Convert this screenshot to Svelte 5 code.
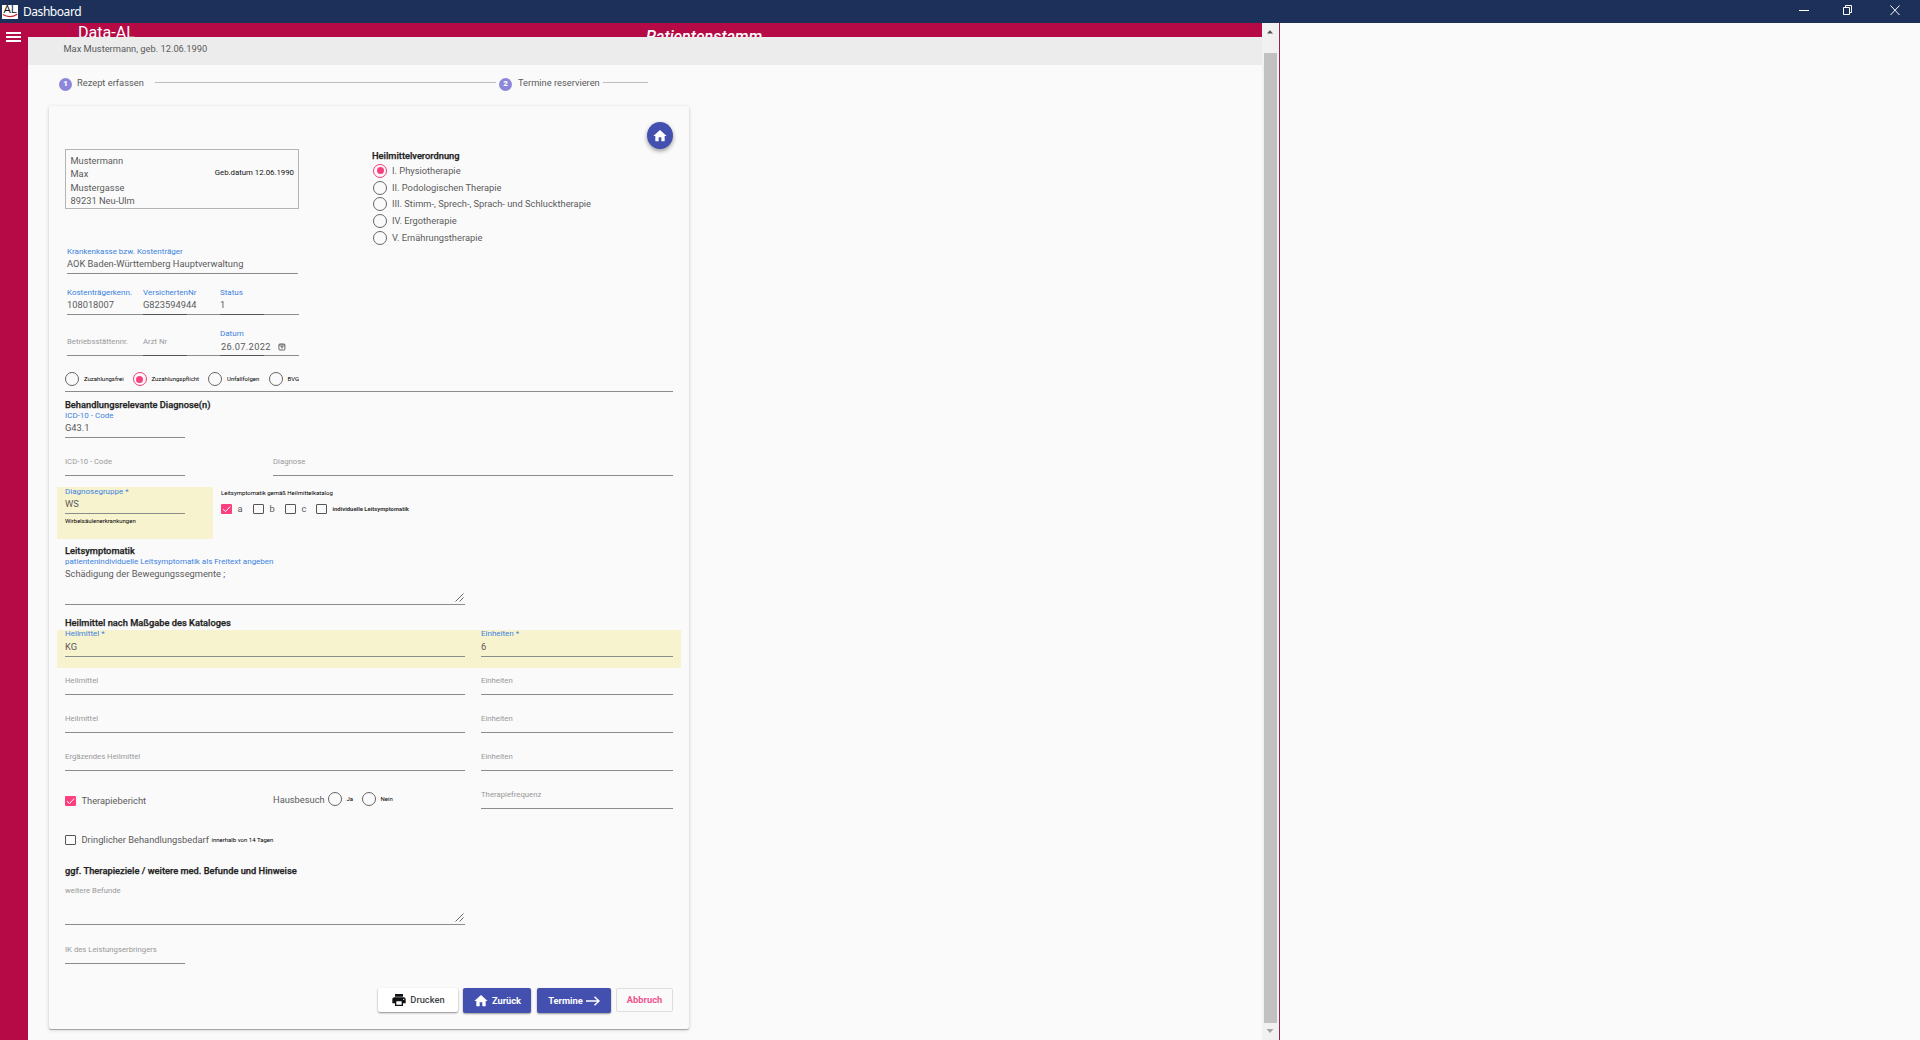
<script>
  const address = ['Mustermann', 'Max', 'Mustergasse', '89231 Neu-Ulm'];
  const therapies = [
    'I. Physiotherapie',
    'II. Podologischen Therapie',
    'III. Stimm-, Sprech-, Sprach- und Schlucktherapie',
    'IV. Ergotherapie',
    'V. Ernährungstherapie'
  ];
  const remedies = ['Heilmittel', 'Heilmittel', 'Ergäzendes Heilmittel'];
</script>

{#snippet field(label, value = '', cls = '')}
  <div class="field {cls}" class:filled={value}>
    <span class="label">{label}</span>
    {#if value}<span class="value">{value}</span>{/if}
  </div>
{/snippet}

{#snippet radio(on = false)}
  <span class="radio" class:on></span>
{/snippet}

{#snippet check(on = false)}
  <span class="check" class:on>
    {#if on}<svg viewBox="0 0 11 10"><path d="M2 5.2 4.5 7.5 9.2 2.6" /></svg>{/if}
  </span>
{/snippet}

{#snippet grip()}
  <svg class="grip" viewBox="0 0 9 9"><path d="M.5 8.5l8-8M4.5 8.5l4-4" /></svg>
{/snippet}

{#snippet home()}
  <svg class="icon" viewBox="0 0 24 24"><path d="M10 20v-6h4v6h5v-8h3L12 3 2 12h3v8z" /></svg>
{/snippet}

<div class="window">
  <header class="titlebar">
    <svg class="logo" viewBox="0 0 16 14">
      <rect width="16" height="14" fill="#fff" />
      <text x="1.4" y="8.4" textLength="13.5" lengthAdjust="spacingAndGlyphs">AL</text>
      <path d="M.8 9.6Q8 13.8 15.2 9.2" fill="none" stroke="#c02030" stroke-width="1.2" />
    </svg>
    <span class="wtitle">Dashboard</span>
    <svg class="wbtns" viewBox="0 0 120 23">
      <path d="M6 10.5h10M50.5 7.5h6v7h-6zM52.5 7V5.500h6v7H57M97.500 5.500l9 9.500M106.500 5.500l-9 9.500" />
    </svg>
  </header>

  <div class="shell">
    <nav class="rail"><i></i><i></i><i></i></nav>
    <main class="main">
      <div class="appbar">
        <span class="brand">Data-AL</span>
        <span class="page">Patientenstamm</span>
      </div>
      <div class="patient">Max Mustermann, geb. 12.06.1990</div>

      <div class="stepper">
        <span class="num">1</span><span class="s1">Rezept erfassen</span><hr class="h1" />
        <span class="num">2</span><span class="s2">Termine reservieren</span><hr class="h2" />
      </div>

      <section class="card">
        <div class="fab">{@render home()}</div>

        <div class="top">
          <div class="address">
            <div class="lines">
              {#each address as a}<span>{a}</span>{/each}
            </div>
            <span class="born">Geb.datum 12.06.1990</span>
          </div>
          <div class="orders">
            <b class="head">Heilmittelverordnung</b>
            {#each therapies as t, i}
              <label class="order">{@render radio(i === 0)}<span>{t}</span></label>
            {/each}
          </div>
        </div>

        <div class="insurer">{@render field('Krankenkasse bzw. Kostenträger', 'AOK Baden-Württemberg Hauptverwaltung')}</div>
        <div class="triple">
          {@render field('Kostenträgerkenn.', '108018007')}
          {@render field('VersichertenNr', 'G823594944', 'strong')}
          {@render field('Status', '1', 'strong')}
        </div>
        <div class="triple">
          {@render field('Betriebsstättennr.')}
          {@render field('Arzt Nr', '', 'strong')}
          <div class="field filled strong date">
            <span class="label">Datum</span>
            <span class="value">26.07.2022
              <svg viewBox="0 0 8 8"><rect x=".9" y="1" width="6" height="6" rx="1" /><path d="M1 2h6M2.500 3.700h3M3.200 4.800h1.600" /></svg>
            </span>
          </div>
        </div>

        <div class="copay">
          <label>{@render radio()}<span>Zuzahlungsfrei</span></label>
          <label>{@render radio(true)}<span>Zuzahlungspflicht</span></label>
          <label>{@render radio()}<span>Unfallfolgen</span></label>
          <label>{@render radio()}<span>BVG</span></label>
        </div>

        <b class="head diag">Behandlungsrelevante Diagnose(n)</b>
        <div class="short">{@render field('ICD-10 - Code', 'G43.1')}</div>
        <div class="codes">
          {@render field('ICD-10 - Code')}
          {@render field('Diagnose')}
        </div>

        <div class="grouprow">
          <div class="mark">
            {@render field('Diagnosegruppe *', 'WS')}
            <span class="hint">Wirbelsäulenerkrankungen</span>
          </div>
          <div class="symptoms">
            <span class="cap">Leitsymptomatik gemäß Heilmittelkatalog</span>
            <div class="checks">
              <label>{@render check(true)}<span>a</span></label>
              <label>{@render check()}<span>b</span></label>
              <label>{@render check()}<span>c</span></label>
              <label>{@render check()}<b>individuelle Leitsymptomatik</b></label>
            </div>
          </div>
        </div>

        <b class="head lead">Leitsymptomatik</b>
        <div class="area">
          {@render field('patientenindividuelle Leitsymptomatik als Freitext angeben', 'Schädigung der Bewegungssegmente ;', 'tall')}
          {@render grip()}
        </div>

        <b class="head cat">Heilmittel nach Maßgabe des Kataloges</b>
        <div class="pair marked">
          {@render field('Heilmittel *', 'KG')}
          {@render field('Einheiten *', '6')}
        </div>
        {#each remedies as r}
          <div class="pair">
            {@render field(r)}
            {@render field('Einheiten')}
          </div>
        {/each}

        <div class="pair">
          <div class="opts">
            <label class="rep">{@render check(true)}<span>Therapiebericht</span></label>
            <span class="visit">Hausbesuch</span>
            <label>{@render radio()}<small>Ja</small></label>
            <label>{@render radio()}<small>Nein</small></label>
          </div>
          {@render field('Therapiefrequenz')}
        </div>

        <label class="urgent">{@render check()}<span class="need">Dringlicher Behandlungsbedarf</span><small>innerhalb von 14 Tagen</small></label>

        <b class="head goals">ggf. Therapieziele / weitere med. Befunde und Hinweise</b>
        <div class="area">
          {@render field('weitere Befunde', '', 'tall')}
          {@render grip()}
        </div>
        <div class="short ik">{@render field('IK des Leistungserbringers')}</div>

        <div class="actions">
          <button class="print">
            <svg class="icon" viewBox="0 0 24 24"><path d="M19 8H5c-1.660 0-3 1.340-3 3v6h4v4h12v-4h4v-6c0-1.660-1.340-3-3-3zm-3 11H8v-5h8v5zm3-7c-.550 0-1-.450-1-1s.450-1 1-1 1 .450 1 1-.450 1-1 1zm-1-9H6v4h12V3z" /></svg>
            <span>Drucken</span>
          </button>
          <button class="blue back">{@render home()}<span>Zurück</span></button>
          <button class="blue next"><span>Termine</span><svg class="arrow" viewBox="0 0 14 10"><path d="M0 5h13M8.500 .8 13 5 8.500 9.200" /></svg></button>
          <button class="cancel"><span>Abbruch</span></button>
        </div>
      </section>
    </main>
    <div class="scroll">
      <svg viewBox="0 0 16 30"><path d="M5 10.500h6L8 7.300z" fill="#505050" /></svg>
      <div class="thumb"></div>
      <svg class="dn" viewBox="0 0 16 17"><path d="M4.500 6h7L8 10z" fill="#a3a3a3" /></svg>
    </div>
    <aside class="side"></aside>
  </div>
</div>

<style>
  :global(body) { margin: 0; overflow: hidden; }
  .window {
    width: 1920px; height: 1040px; display: flex; flex-direction: column; overflow: hidden;
    background: #fafafa; font: 9.300px/12px Roboto, sans-serif; color: #5a5a5a;
  }
  .window :global(*) { box-sizing: border-box; }
  span, b, small { white-space: nowrap; }
  .titlebar { height: 23px; background: #1c3059; display: flex; align-items: center; padding-left: 2px; flex: none; }
  .logo { width: 16px; height: 14px; margin-top: 1px; }
  .logo text { font: 10px "Open Sans", sans-serif; fill: #111; }
  .wtitle { font: 12px/22px "Noto Sans", sans-serif; color: #fff; margin-left: 5px; letter-spacing: -.45px; padding-top: 1px; }
  .wbtns { width: 120px; height: 23px; margin-left: auto; margin-right: 7px; fill: none; stroke: #fff; stroke-width: 1; }
  .shell { flex: 1; display: flex; min-height: 0; }
  .rail { width: 28px; flex: none; background: #b50a46; padding: 9px 0 0 6px; display: flex; flex-direction: column; gap: 2px; }
  .rail i { width: 15px; height: 2px; background: #fff; }
  .main { width: 1234px; flex: none; }
  .appbar { height: 14px; background: #b50a46; overflow: hidden; display: flex; color: #fff; align-items: flex-start; }
  .brand { margin: 0 0 0 50px; font-size: 17px; line-height: 19px; width: 568px; transform: scaleX(.945); transform-origin: 0 0; }
  .page { font-size: 16px; line-height: 27px; font-style: italic; font-weight: 500; letter-spacing: .1px; }
  .patient { height: 28px; background: #ececec; padding: 6px 0 0 35.500px; }
  .stepper { display: flex; align-items: center; padding-left: 31px; margin-top: 12px; height: 13px; }
  .num {
    width: 13px; height: 13px; border-radius: 50%; background: #8c87d8; color: #fff; text-align: center;
    font-size: 8px; font-weight: 900; line-height: 12.500px; margin-top: 2px;
  }
  .stepper hr { border: 0; height: 1px; background: #bdbdbd; margin: -2px 0 0; }
  .s1, .s2 { margin: -1px 0 0 5px; width: 78px; }
  .s2 { margin-left: 6px; width: 85px; }
  .stepper .h1 { width: 341px; margin-right: 3px; }
  .h2 { width: 45px; }
  .card {
    margin: 16px 0 0 21px; width: 640px; height: 923px; padding: 16px 16px 0;
    display: flex; flex-direction: column; border-radius: 2px;
    box-shadow: 0 1px 1px rgba(0,0,0,.3), 0 1px 4px rgba(0,0,0,.15);
  }
  .fab {
    width: 26px; height: 27px; border-radius: 50%; background: #4350af; align-self: flex-end; flex: none;
    display: flex; align-items: center; justify-content: center; box-shadow: 0 2px 4px rgba(0,0,0,.4);
  }
  .icon { width: 16px; height: 16px; fill: #fff; flex: none; }
  .top { display: flex; height: 97px; flex: none; }
  .address { width: 234px; height: 60px; border: 1px solid #b5b5b5; display: flex; justify-content: space-between; padding: 4px 4px 0 4.500px; }
  .lines { display: flex; flex-direction: column; }
  .lines span { line-height: 13.300px; }
  .born { font-size: 7.800px; color: #111; line-height: 12px; margin-top: 13px; }
  .orders { margin: 1px 0 0 73px; }
  .head { display: block; font-weight: 500; color: #222; height: 12px; flex: none; -webkit-text-stroke: .25px #222; }
  .orders .head { margin-bottom: .500px; }
  .order { display: flex; align-items: center; height: 16.800px; gap: 5px; padding-left: 1px; }
  .radio { width: 14px; height: 14px; border: 1px solid #666; border-radius: 50%; flex: none; display: inline-flex; align-items: center; justify-content: center; }
  .radio.on { border-color: #f23b7e; }
  .radio.on::after { content: ''; width: 7px; height: 7px; border-radius: 50%; background: #f9407f; }
  .check { width: 11px; height: 10px; border: 1px solid #555; border-radius: 1px; flex: none; display: inline-flex; }
  .check.on { border: 0; background: #fb3f7f; }
  .check svg { width: 11px; height: 10px; fill: none; stroke: #fff; stroke-width: 1; }

  .field { height: 28px; border-bottom: 1px solid #8c8c8c; display: flex; flex-direction: column; min-width: 0; }
  .label { font-size: 7.750px; line-height: 12px; color: #999; padding-top: 8px; }
  .filled .label { font-size: 8px; padding-top: 0; color: #3b82e0; }
  .value { line-height: 13px; margin-top: -1px; }
  .field.tall { height: 49px; }
  .tall:not(.filled) .label { padding-top: 9px; }

  .insurer { margin: 0 0 13px 2px; width: 231px; }
  .triple { margin: 0 0 13px 2px; width: 232px; display: grid; grid-template-columns: 76px 77px 79px; }
  .strong { border-bottom: 0; background: linear-gradient(#555 0 0) 0 100% / 44px 1px no-repeat, linear-gradient(#8c8c8c 0 0) 0 100% / 100% 1px no-repeat; }
  .date .value { letter-spacing: .3px; display: flex; align-items: center; padding-left: 1px; margin-top: 0; }
  .date svg { width: 8px; height: 8px; margin-left: 7px; fill: none; stroke: #555; stroke-width: .9; }

  .copay { height: 23px; padding-top: 3px; border-bottom: 1px solid #8c8c8c; display: flex; flex: none; font-size: 6px; color: #000; line-height: 8px; }
  .copay label { display: flex; align-items: flex-start; }
  .copay label span:last-child { margin: 3px 0 0 5px; }
  .copay label:nth-child(1) { width: 67.500px; }
  .copay label:nth-child(2) { width: 75.500px; }
  .copay label:nth-child(3) { width: 60.500px; }

  .diag { margin-top: 7px; }
  .short { width: 120px; margin-top: -1px; }
  .codes { display: grid; grid-template-columns: 120px 400px; column-gap: 88px; margin-top: 10px; }
  .grouprow { display: flex; margin: 11px 0 0 -8px; height: 52px; }
  .mark { width: 156px; height: 52px; background: #f8f3cf; padding: 0 28px 0 8px; }
  .mark .field { height: 27px; }
  .mark .label { margin-top: -1px; }
  .hint { display: block; font-size: 6px; line-height: 8px; color: #000; margin-top: 3px; }
  .symptoms { margin-left: 8px; }
  .cap { display: block; font-size: 6px; line-height: 8px; color: #000; margin-top: 2px; }
  .checks { display: flex; margin-top: 5.500px; }
  .checks label { display: flex; align-items: center; width: 32px; gap: 5.500px; }
  .checks label:nth-child(3) { width: 31px; }
  .checks b { font-size: 5.900px; font-weight: 700; color: #333; }

  .lead { margin-top: 6px; }
  .area { width: 400px; position: relative; margin-top: -1px; }
  .grip { position: absolute; right: 1px; bottom: 3px; width: 9px; height: 9px; stroke: #555; stroke-width: .9; fill: none; }
  .cat { margin-top: 12px; }
  .pair { display: grid; grid-template-columns: 400px 192px; column-gap: 16px; margin-top: 10px; }
  .marked { margin: 1px -8px 0; padding: 0 8px 11px; background: #f8f3cf; }
  .marked .field { height: 27px; }
  .marked .label { margin-top: -2px; }
  .marked .value { margin-top: 0; }
  .marked + .pair { margin-top: -1px; }
  .opts { display: flex; height: 28px; }
  .opts label { display: flex; align-items: center; height: 14px; margin-top: 11px; }
  .opts .rep { width: 208px; gap: 5.500px; margin-top: 13px; }
  .visit { margin-top: 13px; width: 54.500px; }
  small { font-size: 6px; color: #000; }
  .opts small { margin-left: 5px; width: 15px; }
  .urgent { display: flex; align-items: center; margin-top: 24px; height: 14px; }
  .need { margin: -1px 0 0 5.500px; width: 130px; }
  .goals { margin-top: 18px; }
  .short.ik { margin-top: 11px; }
  .actions { display: flex; margin-top: 24px; height: 25px; justify-content: flex-end; }
  button { border: 0; border-radius: 2px; padding: 0; height: 24px; font: 500 9.300px/24px Roboto, sans-serif; display: flex; align-items: center; justify-content: center; gap: 3px; }
  .print { width: 80px; background: #fff; color: #444; box-shadow: 0 1px 2px rgba(0,0,0,.45); margin-right: 5px; }
  .print .icon { fill: #111; }
  .blue { height: 25px; background: #4350af; color: #fff; font-weight: 700; box-shadow: 0 1px 2px rgba(0,0,0,.4); }
  .back { width: 68px; margin-right: 6px; }
  .next { width: 74px; margin-right: 5px; }
  .arrow { width: 14px; height: 10px; fill: none; stroke: #fff; stroke-width: 1.500; }
  .cancel { width: 57px; border: 1px solid #ddd; background: transparent; color: #f0548f; font-weight: 700; }

  .scroll { width: 16px; flex: none; background: #f1f1f1; display: flex; flex-direction: column; }
  .scroll svg { width: 16px; height: 30px; }
  .scroll .dn { height: 17px; }
  .thumb { flex: 1; background: #c1c1c1; margin: 0 1px 0 2px; }
  .side { margin-left: 1px; border-left: 1px solid #a01d55; flex: 1; }
</style>
